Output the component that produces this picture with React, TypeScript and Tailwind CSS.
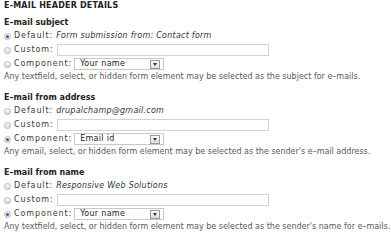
import React from "react";

const font = { fontFamily: '"DejaVu Sans", Verdana, sans-serif' };

function Radio({ checked }: { checked?: boolean }) {
  return (
    <span className="inline-flex h-[7px] w-[7px] shrink-0 items-center justify-center rounded-full border border-[#b8b8b8] bg-gradient-to-b from-[#ffffff] to-[#d8d8d8]">
      {checked && <span className="h-[3px] w-[3px] rounded-full bg-[#2a64a8]" />}
    </span>
  );
}

function Select({ value }: { value: string }) {
  return (
    <span className="inline-flex h-[12px] w-[90px] items-center justify-between border border-[#c8c8c8] bg-white pl-[5px] pr-[3px] text-[8px] leading-none tracking-[0.3px] text-[#222]">
      {value}
      <span className="flex h-[9px] w-[10px] items-center justify-center border border-[#9a9a9a] bg-gradient-to-b from-[#fafafa] to-[#dedede]">
        <span className="h-0 w-0 border-x-[2px] border-t-[3px] border-x-transparent border-t-[#333]" />
      </span>
    </span>
  );
}

function Section({
  title,
  def,
  checked,
  component,
  help,
}: {
  title: string;
  def: string;
  checked: "default" | "component";
  component: string;
  help: string;
}) {
  return (
    <div className="flex flex-col">
      <div className="h-[12px] text-[8px] font-bold leading-[12px] text-[#222]">{title}</div>
      <div className="flex h-[14px] items-center text-[8px] leading-none">
        <Radio checked={checked === "default"} />
        <span className="ml-[3px] tracking-[0.9px] text-[#3a3a3a]">Default:</span>
        <em className="ml-[3px] tracking-[0.25px] text-[#333]">{def}</em>
      </div>
      <div className="flex h-[14px] items-center text-[8px] leading-none">
        <Radio />
        <span className="ml-[3px] tracking-[0.9px] text-[#3a3a3a]">Custom:</span>
        <span className="ml-[3px] h-[12px] w-[212px] border border-[#d2d2d2] bg-white" />
      </div>
      <div className="flex h-[14px] items-center text-[8px] leading-none">
        <Radio checked={checked === "component"} />
        <span className="ml-[3px] tracking-[0.9px] text-[#3a3a3a]">Component:</span>
        <span className="ml-[2px]">
          <Select value={component} />
        </span>
      </div>
      <div className="h-[12px] whitespace-nowrap text-[8px] leading-[12px] text-[#5a5a5a]">{help}</div>
    </div>
  );
}

export default function App() {
  return (
    <div className="h-[232px] w-[391px] overflow-hidden bg-white px-[4px]" style={font}>
      <div className="mt-[1px] h-[10px] text-[8px] font-bold uppercase leading-[10px] tracking-[0.2px] text-[#222]">
        E-mail header details
      </div>
      <div className="mt-[6px] flex flex-col gap-[9px]">
        <Section
          title="E–mail subject"
          def="Form submission from: Contact form"
          checked="default"
          component="Your name"
          help="Any textfield, select, or hidden form element may be selected as the subject for e–mails."
        />
        <Section
          title="E–mail from address"
          def="drupalchamp@gmail.com"
          checked="component"
          component="Email id"
          help="Any email, select, or hidden form element may be selected as the sender's e–mail address."
        />
        <Section
          title="E–mail from name"
          def="Responsive Web Solutions"
          checked="component"
          component="Your name"
          help="Any textfield, select, or hidden form element may be selected as the sender's name for e–mails."
        />
      </div>
    </div>
  );
}
